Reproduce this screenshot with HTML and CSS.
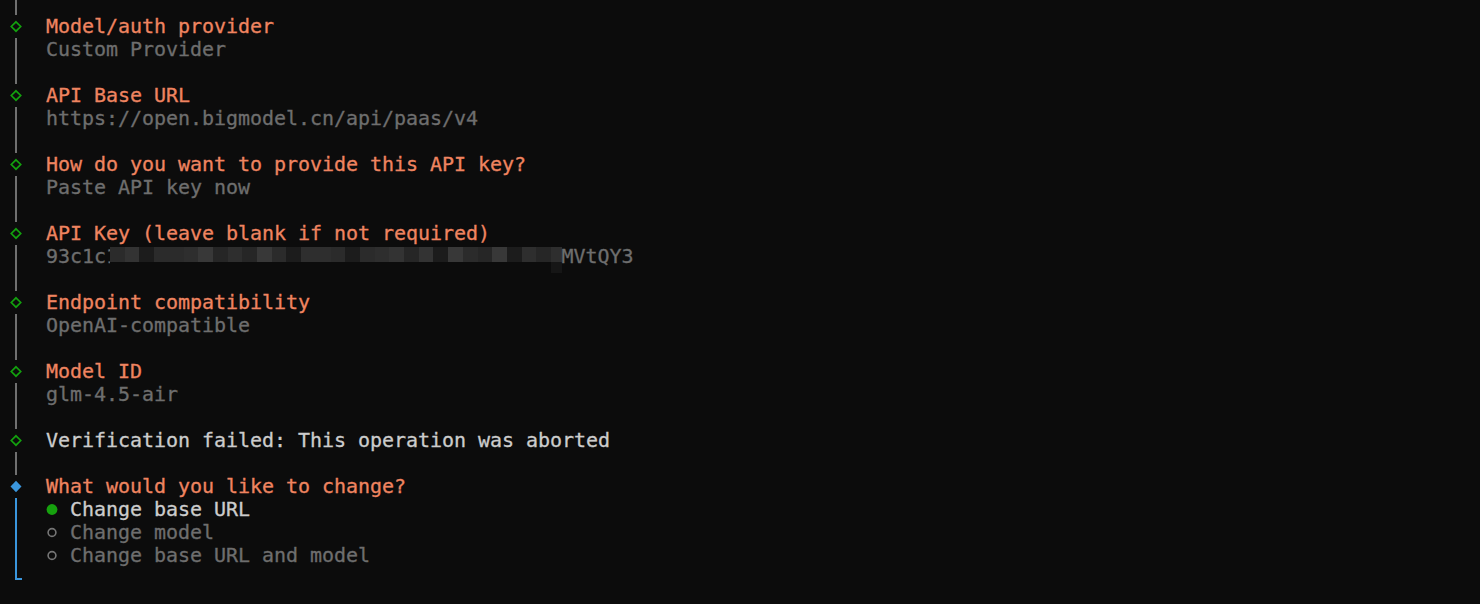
FILE: index.html
```html
<!DOCTYPE html>
<html lang="en">
<head>
<meta charset="utf-8">
<title>Setup</title>
<link rel="stylesheet" href="styles.css">
</head>
<body>
<div class="term">
  <div class="row"><span class="gut bar"></span></div>
  <div class="row"><span class="gut"><svg class="dia" width="12" height="23" viewBox="0 0 12 23"><path d="M6 6.8 L10.7 11.5 L6 16.2 L1.3 11.5 Z" fill="none" stroke="#13a10e" stroke-width="1.7"/></svg></span><span class="title">Model/auth provider</span></div>
  <div class="row"><span class="gut bar"></span><span class="val">Custom Provider</span></div>
  <div class="row"><span class="gut bar"></span></div>
  <div class="row"><span class="gut"><svg class="dia" width="12" height="23" viewBox="0 0 12 23"><path d="M6 6.8 L10.7 11.5 L6 16.2 L1.3 11.5 Z" fill="none" stroke="#13a10e" stroke-width="1.7"/></svg></span><span class="title">API Base URL</span></div>
  <div class="row"><span class="gut bar"></span><span class="val">https://open.bigmodel.cn/api/paas/v4</span></div>
  <div class="row"><span class="gut bar"></span></div>
  <div class="row"><span class="gut"><svg class="dia" width="12" height="23" viewBox="0 0 12 23"><path d="M6 6.8 L10.7 11.5 L6 16.2 L1.3 11.5 Z" fill="none" stroke="#13a10e" stroke-width="1.7"/></svg></span><span class="title">How do you want to provide this API key?</span></div>
  <div class="row"><span class="gut bar"></span><span class="val">Paste API key now</span></div>
  <div class="row"><span class="gut bar"></span></div>
  <div class="row"><span class="gut"><svg class="dia" width="12" height="23" viewBox="0 0 12 23"><path d="M6 6.8 L10.7 11.5 L6 16.2 L1.3 11.5 Z" fill="none" stroke="#13a10e" stroke-width="1.7"/></svg></span><span class="title">API Key (leave blank if not required)</span></div>
  <div class="row"><span class="gut bar"></span><span class="val">93c1c<span class="clip">1</span><span class="mosaic"><i class="k3"></i><i class="k5"></i><i class="k1"></i><i class="k3"></i><i class="k3"></i><i class="k4"></i><i class="k6"></i><i class="k2"></i><i class="k4"></i><i class="k2"></i><i class="k6"></i><i class="k3"></i><i class="k1"></i><i class="k4"></i><i class="k4"></i><i class="k3"></i><i class="k1"></i><i class="k3"></i><i class="k4"></i><i class="k5"></i><i class="k2"></i><i class="k5"></i><i class="k1"></i><i class="k6"></i><i class="k3"></i><i class="k2"></i><i class="k6"></i><i class="k1"></i><i class="k4"></i><i class="k2"></i><i class="last"></i></span>MVtQY3</span></div>
  <div class="row"><span class="gut bar"></span></div>
  <div class="row"><span class="gut"><svg class="dia" width="12" height="23" viewBox="0 0 12 23"><path d="M6 6.8 L10.7 11.5 L6 16.2 L1.3 11.5 Z" fill="none" stroke="#13a10e" stroke-width="1.7"/></svg></span><span class="title">Endpoint compatibility</span></div>
  <div class="row"><span class="gut bar"></span><span class="val">OpenAI-compatible</span></div>
  <div class="row"><span class="gut bar"></span></div>
  <div class="row"><span class="gut"><svg class="dia" width="12" height="23" viewBox="0 0 12 23"><path d="M6 6.8 L10.7 11.5 L6 16.2 L1.3 11.5 Z" fill="none" stroke="#13a10e" stroke-width="1.7"/></svg></span><span class="title">Model ID</span></div>
  <div class="row"><span class="gut bar"></span><span class="val">glm-4.5-air</span></div>
  <div class="row"><span class="gut bar"></span></div>
  <div class="row"><span class="gut"><svg class="dia" width="12" height="23" viewBox="0 0 12 23"><path d="M6 6.8 L10.7 11.5 L6 16.2 L1.3 11.5 Z" fill="none" stroke="#13a10e" stroke-width="1.7"/></svg></span><span class="plain">Verification failed: This operation was aborted</span></div>
  <div class="row"><span class="gut bar"></span></div>
  <div class="row"><span class="gut"><svg class="dia" width="12" height="23" viewBox="0 0 12 23"><path d="M6 5.8 L11.5 11.5 L6 17.2 L0.5 11.5 Z" fill="#3a96dd"/></svg></span><span class="title">What would you like to change?</span></div>
  <div class="row"><span class="gut abar"></span><span class="opt sel"><svg class="dot" width="12" height="23" viewBox="0 0 12 23"><circle cx="6" cy="11.5" r="5.4" fill="#16a10e"/></svg> Change base URL</span></div>
  <div class="row"><span class="gut abar"></span><span class="opt"><svg class="dot" width="12" height="23" viewBox="0 0 12 23"><circle cx="6" cy="11.5" r="3.9" fill="none" stroke="#767676" stroke-width="1.6"/></svg> Change model</span></div>
  <div class="row"><span class="gut abar"></span><span class="opt"><svg class="dot" width="12" height="23" viewBox="0 0 12 23"><circle cx="6" cy="11.5" r="3.9" fill="none" stroke="#767676" stroke-width="1.6"/></svg> Change base URL and model</span></div>
  <div class="row"><span class="gut end"></span></div>
  <div class="row"><span class="gut"></span></div>
</div>
</body>
</html>
```

FILE: styles.css
```css
html, body {
  margin: 0;
  padding: 0;
  background: #0c0c0c;
  overflow: hidden;
}

.term {
  margin-top: -8.5px;
  padding-left: 10px;
  font-family: "DejaVu Sans Mono", "Liberation Mono", monospace;
  font-size: 20px;
  letter-spacing: -0.04px;
  color: #cccccc;
  -webkit-text-stroke: 0.3px currentColor;
}

.row {
  display: flex;
  height: 23px;
  line-height: 23px;
  white-space: pre;
}

.gut {
  flex: none;
  width: 12px;
  margin-right: 24px;
  display: flex;
  justify-content: center;
}

.gut.bar::before {
  content: "";
  width: 2px;
  background: #707070;
}

.gut.abar::before {
  content: "";
  width: 2px;
  background: #3a96dd;
}

.gut.end {
  justify-content: flex-start;
}

.gut.end::before {
  content: "";
  box-sizing: border-box;
  width: 7px;
  height: 13.5px;
  margin-left: 5px;
  align-self: flex-start;
  border-left: 2px solid #3a96dd;
  border-bottom: 2px solid #3a96dd;
}

.dia {
  display: block;
}

.dot {
  display: inline-block;
  vertical-align: top;
}

.title {
  color: #ef8460;
}

.val {
  color: #6e6e6e;
}

.plain {
  color: #cccccc;
}

.opt {
  color: #6e6e6e;
}

.opt.sel {
  color: #cccccc;
}

.clip {
  display: inline-block;
  width: 4px;
  overflow: hidden;
  vertical-align: top;
}

.mosaic {
  display: inline-flex;
  vertical-align: top;
  width: 452px;
  height: 15px;
  margin-top: 2.5px;
  margin-right: -0.5px;
}

.mosaic i {
  flex: 1;
  height: 15px;
}

.mosaic i.last {
  flex: none;
  width: 11px;
  height: 26px;
  background: linear-gradient(#2e2e2e 0 15px, #161616 15px 100%);
}

.k1 { background: #1c1c1c; }
.k2 { background: #262626; }
.k3 { background: #2b2b2b; }
.k4 { background: #2e2e2e; }
.k5 { background: #333333; }
.k6 { background: #383838; }
```
